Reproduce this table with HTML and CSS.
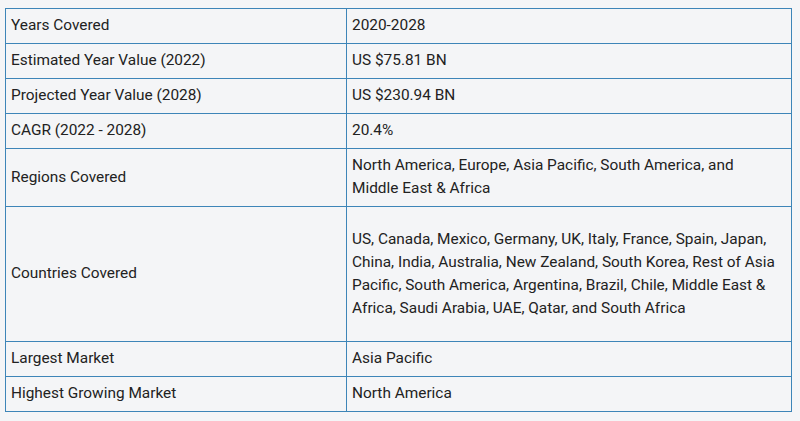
FILE: index.html
```html
<!DOCTYPE html>
<html>
<head>
<meta charset="utf-8">
<link rel="stylesheet" href="styles.css">
</head>
<body>
<table class="info">
  <tr><td class="k">Years Covered</td><td class="v">2020-2028</td></tr>
  <tr><td class="k">Estimated Year Value (2022)</td><td class="v">US $75.81 BN</td></tr>
  <tr><td class="k">Projected Year Value (2028)</td><td class="v">US $230.94 BN</td></tr>
  <tr><td class="k">CAGR (2022 - 2028)</td><td class="v">20.4%</td></tr>
  <tr><td class="k">Regions Covered</td><td class="v">North America, Europe, Asia Pacific, South America, and Middle East &amp; Africa</td></tr>
  <tr class="tall"><td class="k">Countries Covered</td><td class="v">US, Canada, Mexico, Germany, UK, Italy, France, Spain, Japan, China, India, Australia, New Zealand, South Korea, Rest of Asia Pacific, South America, Argentina, Brazil, Chile, Middle East &amp; Africa, Saudi Arabia, UAE, Qatar, and South Africa</td></tr>
  <tr><td class="k">Largest Market</td><td class="v">Asia Pacific</td></tr>
  <tr><td class="k">Highest Growing Market</td><td class="v">North America</td></tr>
</table>
</body>
</html>
```
FILE: styles.css
```css
html, body {
  background: #f4f5f7;
}
body {
  margin: 0;
  padding: 8px 0 0 5px;
  font-family: Roboto, "Liberation Sans", sans-serif;
  font-size: 15.4px;
  color: #222;
}
.info {
  border-collapse: collapse;
  width: 787px;
  border: 1px solid #6b9dc2;
}
.info td {
  border: 1px solid #3d85b8;
  padding: 5px 6px 6px 5px;
  line-height: 23px;
  vertical-align: middle;
}
.info .k {
  width: 329px;
}
.info .v {
  padding-right: 11px;
}
.info .tall .v {
  padding-top: 21px;
  padding-bottom: 21px;
}
```
